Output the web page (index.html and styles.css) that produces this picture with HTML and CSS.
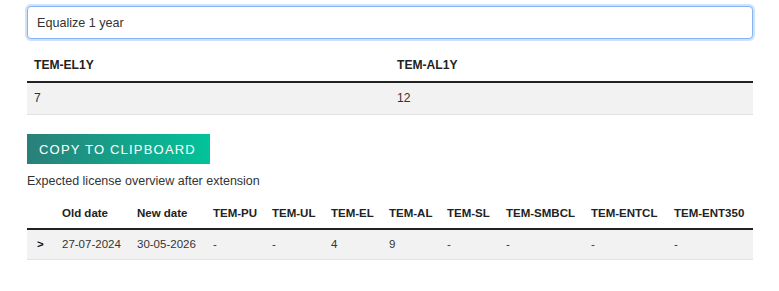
FILE: index.html
```html
<!DOCTYPE html>
<html lang="en">

<head>
    <meta charset="UTF-8">
    <meta name="viewport" content="width=device-width, initial-scale=1.0">
    <title>License extension</title>
    <link rel="stylesheet" href="styles.css">
</head>

<body>

    <div class="container">
        <input type="text" class="search" value="Equalize 1 year">

        <table class="result">
            <thead>
                <tr>
                    <th>TEM-EL1Y</th>
                    <th>TEM-AL1Y</th>
                </tr>
            </thead>
            <tbody>
                <tr>
                    <td>7</td>
                    <td>12</td>
                </tr>
            </tbody>
        </table>

        <button class="copy-btn">COPY TO CLIPBOARD</button>

        <p class="caption">Expected license overview after extension</p>

        <table class="overview">
            <thead>
                <tr>
                    <th></th>
                    <th>Old date</th>
                    <th>New date</th>
                    <th>TEM-PU</th>
                    <th>TEM-UL</th>
                    <th>TEM-EL</th>
                    <th>TEM-AL</th>
                    <th>TEM-SL</th>
                    <th>TEM-SMBCL</th>
                    <th>TEM-ENTCL</th>
                    <th>TEM-ENT350</th>
                </tr>
            </thead>
            <tbody>
                <tr>
                    <td class="toggle">&gt;</td>
                    <td>27-07-2024</td>
                    <td>30-05-2026</td>
                    <td>-</td>
                    <td>-</td>
                    <td>4</td>
                    <td>9</td>
                    <td>-</td>
                    <td>-</td>
                    <td>-</td>
                    <td>-</td>
                </tr>
            </tbody>
        </table>
    </div>

</body>

</html>
```

FILE: styles.css
```css
* {
    margin: 0;
    padding: 0;
    box-sizing: border-box;
    font-family: "Liberation Sans", Arial, sans-serif;
}

body {
    background: #fff;
    color: #333;
}

.container {
    width: 726px;
    margin: 6px 0 0 27px;
}

.search {
    display: block;
    width: 100%;
    height: 33px;
    padding: 0 9px;
    font-size: 12.6px;
    color: #333;
    border: 1px solid #86b4f0;
    border-radius: 4px;
    box-shadow: 0 0 0 2px rgba(150, 190, 245, 0.45);
    outline: none;
}

table {
    width: 100%;
    border-collapse: collapse;
}

th {
    text-align: left;
    font-weight: bold;
    color: #222;
    border-bottom: 2px solid #222;
    vertical-align: bottom;
    white-space: nowrap;
}

td {
    background: #f2f2f2;
    border-bottom: 1px solid #e2e2e2;
    white-space: nowrap;
}

.result {
    margin-top: 11px;
    font-size: 12.1px;
    line-height: 15px;
}

.result th,
.result td {
    width: 50%;
    padding: 8px 7px;
}

.copy-btn {
    display: block;
    margin-top: 19px;
    height: 30px;
    width: 183px;
    padding: 0 12px;
    border: none;
    background: linear-gradient(to right, #2a7f79, #02c39a);
    color: #fff;
    font-size: 13px;
    letter-spacing: 1.2px;
    text-align: left;
    cursor: pointer;
}

.caption {
    margin-top: 8px;
    font-size: 12.5px;
    line-height: 18px;
    color: #333;
}

.overview {
    margin-top: 9px;
    font-size: 11.5px;
    line-height: 15px;
    table-layout: fixed;
}

.overview th,
.overview td {
    padding: 7px 0 7px 8px;
    overflow: visible;
}

.overview th:nth-child(1) { width: 27px; }
.overview th:nth-child(2) { width: 75px; }
.overview th:nth-child(3) { width: 76px; }
.overview th:nth-child(4) { width: 59px; }
.overview th:nth-child(5) { width: 59px; }
.overview th:nth-child(6) { width: 58px; }
.overview th:nth-child(7) { width: 58px; }
.overview th:nth-child(8) { width: 59px; }
.overview th:nth-child(9) { width: 85px; }
.overview th:nth-child(10) { width: 83px; }
.overview th:nth-child(11) { width: 87px; }

.overview .toggle {
    font-weight: bold;
    color: #111;
    padding-left: 10px;
}
```
